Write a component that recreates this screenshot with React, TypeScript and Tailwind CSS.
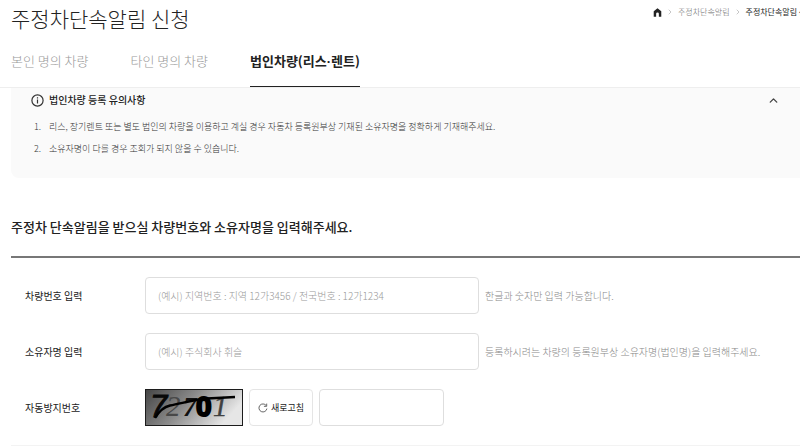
import React, { useState } from "react";
import { ChevronRight, ChevronUp } from "lucide-react";

const TABS = [
    "본인 명의 차량",
    "타인 명의 차량",
    <>법인차량(리스<span className="font-['Liberation_Sans',sans-serif]">·</span>렌트)</>,
];

const NOTICES = [
    "리스, 장기렌트 또는 별도 법인의 차량을 이용하고 계실 경우 자동차 등록원부상 기재된 소유자명을 정확하게 기재해주세요.",
    "소유자명이 다를 경우 조회가 되지 않을 수 있습니다.",
];

const FIELD_CLASS =
    "h-[37px] rounded-[4px] border border-[#dedede] bg-white px-3 text-[10px] font-light text-[#222] outline-none placeholder:text-[#999] focus:border-[#888]";

function HomeIcon() {
    return (
        <svg viewBox="0 0 10 10" className="h-[9px] w-[9px] shrink-0" aria-hidden="true">
            <path d="M5 .4 9.2 3.7V9.6H6.5V6.4a1.5 1.5 0 0 0-3 0V9.6H.8V3.7Z" fill="#222" />
        </svg>
    );
}

function InfoIcon() {
    return (
        <svg viewBox="0 0 13 13" className="h-[13px] w-[13px] shrink-0" fill="none" aria-hidden="true">
            <circle cx="6.5" cy="6.5" r="5.6" stroke="#333" strokeWidth="1.2" />
            <path d="M6.5 5.6V9.6M6.5 3.3V4.6" stroke="#333" strokeWidth="1.2" />
        </svg>
    );
}

function RefreshIcon() {
    return (
        <svg viewBox="0 0 10 10" className="h-[10px] w-[10px] shrink-0" fill="none" aria-hidden="true">
            <path d="M8.2 2.6A4 4 0 1 0 8.9 5.6" stroke="#666" strokeWidth="1" />
            <path d="M8.7.6V3.3H5.9" stroke="#666" strokeWidth="1" />
        </svg>
    );
}

function Captcha() {
    return (
        <svg viewBox="0 0 98 37" className="h-[37px] w-[98px] shrink-0" role="img" aria-label="자동방지번호">
            <defs>
                <linearGradient id="captchaBg" x1="0" y1="0" x2="1" y2="0.35">
                    <stop offset="0" stopColor="#444" />
                    <stop offset="0.5" stopColor="#8c8c8c" />
                    <stop offset="1" stopColor="#e6e6e6" />
                </linearGradient>
            </defs>
            <rect x="0.5" y="0.5" width="97" height="36" fill="url(#captchaBg)" stroke="#1c1c1c" />
            <text x="5" y="28" fontSize="31" fontStyle="italic" fontFamily="'Liberation Sans', sans-serif" fill="#080808" stroke="#080808" strokeWidth="1">7</text>
            <text x="21" y="27" fontSize="29" fontStyle="italic" fontFamily="'Liberation Serif', serif" fill="#484848">2</text>
            <text x="38" y="27" fontSize="27" fontStyle="italic" fontWeight="700" fontFamily="'Liberation Serif', serif" fill="#111">7</text>
            <text x="51" y="27" fontSize="28" fontWeight="700" fontFamily="'Liberation Sans', sans-serif" fill="#000" stroke="#000" strokeWidth="2">0</text>
            <text x="68" y="27" fontSize="29" fontStyle="italic" fontFamily="'Liberation Serif', serif" fill="#404040" stroke="#404040" strokeWidth="0.4">1</text>
            <path d="M10 29C13 24 18 18 25 16.500C38 14 49 10.500 62 9.500L90 8" fill="none" stroke="#000" strokeWidth="2.400" />
        </svg>
    );
}

export default function App() {
    const [tab, setTab] = useState(2);
    const [open, setOpen] = useState(true);

    return (
        <div className="overflow-hidden bg-white font-['Noto_Sans_CJK_KR',sans-serif] text-[#222]">
            <header className="flex h-9 items-start justify-between pl-[11px]">
                <h1 className="pt-[3px] text-[21px] leading-[30px] font-light">주정차단속알림 신청</h1>
                <nav
                    aria-label="현재 위치"
                    className="flex w-[147px] items-center gap-1 overflow-hidden pt-1 text-[8px] leading-4 whitespace-nowrap"
                >
                    <a href="#home" aria-label="홈"><HomeIcon /></a>
                    <ChevronRight className="h-2 w-2 shrink-0 text-[#aaa]" />
                    <a href="#alarm" className="font-light text-[#666]">주정차단속알림</a>
                    <ChevronRight className="h-2 w-2 shrink-0 text-[#aaa]" />
                    <span>주정차단속알림 신청</span>
                </nav>
            </header>

            {/* Tabs */}
            <div role="tablist" className="flex gap-[42px] border-b border-[#eee] pl-[11px]">
                {TABS.map((name, i) => (
                    <button
                        key={i}
                        type="button"
                        role="tab"
                        aria-selected={tab === i}
                        onClick={() => setTab(i)}
                        className={`h-[51px] border-b text-[13px] ${
                            tab === i
                                ? "border-[#222] font-bold text-[#222]"
                                : "border-transparent font-light text-[#999]"
                        }`}
                    >
                        {name}
                    </button>
                ))}
            </div>

            <main className="pl-[11px]">
                {/* Notice */}
                <section className="rounded-bl-lg bg-[#fafafa] pt-1 pr-5 pb-[18px] pl-5">
                    <button
                        type="button"
                        aria-expanded={open}
                        onClick={() => setOpen(!open)}
                        className="flex w-full items-center gap-[5px] text-[10px] leading-4 font-medium"
                    >
                        <InfoIcon />
                        법인차량 등록 유의사항
                        <ChevronUp className="ml-auto h-[13px] w-[13px] text-[#444]" strokeWidth={2.5} />
                    </button>
                    {open && (
                        <ol className="mt-2 text-[9px] leading-[22px] font-light text-[#333]">
                            {NOTICES.map((text, i) => (
                                <li key={text} className="flex">
                                    <span className="w-[18px] shrink-0 pl-[3px]">{i + 1}.</span>
                                    <span>{text}</span>
                                </li>
                            ))}
                        </ol>
                    )}
                </section>

                <form onSubmit={(e) => e.preventDefault()}>
                    <h2 className="mt-[39px] text-[13px] leading-5 font-medium">
                        주정차 단속알림을 받으실 차량번호와 소유자명을 입력해주세요.
                    </h2>
                    <div className="mt-[19px] flex flex-col gap-[19px] border-t-2 border-b border-t-[#777] border-b-[#f3f3f3] py-[19px] pl-[14px] text-[10px]">
                        <div className="flex items-center">
                            <label htmlFor="carNo" className="w-[120px] shrink-0">차량번호 입력</label>
                            <input
                                id="carNo"
                                type="text"
                                placeholder="(예시) 지역번호 : 지역 12가3456 / 전국번호 : 12가1234"
                                className={`${FIELD_CLASS} w-[334px]`}
                            />
                            <p className="ml-[6px] font-light text-[#888]">한글과 숫자만 입력 가능합니다.</p>
                        </div>
                        <div className="flex items-center">
                            <label htmlFor="owner" className="w-[120px] shrink-0">소유자명 입력</label>
                            <input
                                id="owner"
                                type="text"
                                placeholder="(예시) 주식회사 휘슬"
                                className={`${FIELD_CLASS} w-[334px]`}
                            />
                            <p className="ml-[6px] font-light text-[#888]">
                                등록하시려는 차량의 등록원부상 소유자명(법인명)을 입력해주세요.
                            </p>
                        </div>
                        <div className="flex items-center">
                            <label htmlFor="captcha" className="w-[120px] shrink-0">자동방지번호</label>
                            <div className="flex gap-[6px]">
                                <Captcha />
                                <button
                                    type="button"
                                    className="flex h-[37px] w-16 items-center justify-center gap-[3px] rounded-[4px] border border-[#e5e5e5] text-[9px] text-[#222]"
                                >
                                    <RefreshIcon />
                                    새로고침
                                </button>
                                <input id="captcha" type="text" className={`${FIELD_CLASS} w-[125px]`} />
                            </div>
                        </div>
                    </div>
                </form>
            </main>
        </div>
    );
}
